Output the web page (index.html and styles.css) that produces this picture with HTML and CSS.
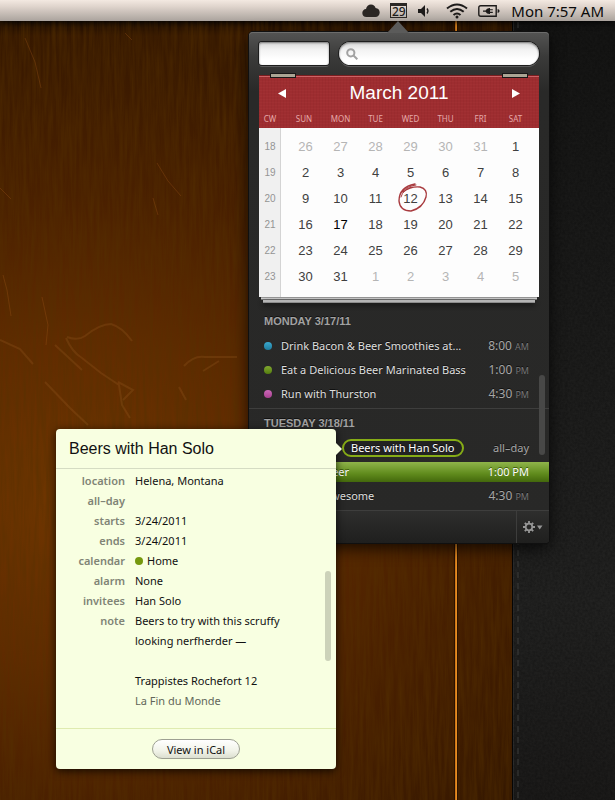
FILE: index.html
```html
<!DOCTYPE html>
<html lang="en">
<head>
<meta charset="utf-8">
<meta name="viewport" content="width=device-width, initial-scale=1">
<title>Calendar</title>
<link rel="stylesheet" href="styles.css">
</head>
<body>
<div class="backdrop" aria-hidden="true">
  <div class="wood">
    <svg class="texture" width="100%" height="100%">
      <filter id="grain" x="0" y="0" width="100%" height="100%">
        <feTurbulence type="fractalNoise" baseFrequency="0.3 0.018" numOctaves="4" seed="7"/>
        <feColorMatrix values="0 0 0 0 0.09  0 0 0 0 0.03  0 0 0 0 0  0.9 0 0 0 -0.25"/>
      </filter>
      <rect width="100%" height="100%" filter="url(#grain)"/>
      <g class="scratches">
        <path d="M25 38L35 62L41 88M125 33L132 40M157 163L168 181L181 196M153 198L158 215M3 275L7 290L11 316M0 188L11 199M42 297L48 325L46 345"/>
        <path class="soft" d="M67 337Q78 341 85 336Q100 324 111 324Q122 327 132 341M66 338Q72 352 82 358L101 373L119 385L122 405L130 418M55 345L82 370M45 382L70 408L88 425M0 340L20 349L33 364M184 366Q194 355 205 357L237 357M203 371L219 361M179 387L186 400M118 382L133 390L123 400"/>
      </g>
    </svg>
    <div class="inlay"></div>
  </div>
  <div class="leather">
    <svg class="texture" width="100%" height="100%">
      <filter id="hide" x="0" y="0" width="100%" height="100%">
        <feTurbulence type="fractalNoise" baseFrequency="0.4" numOctaves="3" seed="3"/>
        <feColorMatrix values="0 0 0 0 0  0 0 0 0 0  0 0 0 0 0  0.4 0 0 0 -0.1"/>
      </filter>
      <rect width="100%" height="100%" filter="url(#hide)"/>
      <line class="stitch" x1="5" y1="0" x2="5" y2="100%"/>
    </svg>
  </div>
</div>

<header class="menubar">
  <svg width="18" height="14" viewBox="0 0 18 14"><path d="M4.5 13A4.2 4.2 0 0 1 .3 9C.3 6.8 2 5.1 4 5 4.4 2.400 6.500.500 9 .500c2.300 0 4 1.500 4.600 3.500C16 4.100 17.700 6 17.700 8.500c0 2.500-1.900 4.500-4.300 4.500z" fill="#2b2724"/></svg>
  <div class="daybadge">29</div>
  <svg class="speaker" width="12" height="12" viewBox="0 0 12 12"><path d="M0 4h3l4-4v12L3 8H0z" fill="#1d1b1a"/><path d="M9 3.500q2 2.500 0 5" fill="none" stroke="#1d1b1a" stroke-width="1.300"/></svg>
  <svg class="wifi" width="22" height="16" viewBox="0 0 22 16" fill="none" stroke="#1d1b1a" stroke-width="2"><path d="M1 5.500Q11-2.500 21 5.500M4.300 8.800Q11 3.200 17.700 8.800M7.500 12Q11 9 14.500 12"/><circle cx="11" cy="14" r="1.500" fill="#1d1b1a" stroke="none"/></svg>
  <svg class="battery" width="22" height="12" viewBox="0 0 22 12"><path d="M6 .800H2.800q-2 0-2 2v6.400q0 2 2 2H6M6 .800h12.200v10.400H6" fill="none" stroke="#1d1b1a" stroke-width="1.400"/><path d="M19.600 4q2 .3 2 2t-2 2zM5 5.500h2.600Q8.500 3 11.500 3h.5v1.200h2.800v1.100H12v1.500h2.800v1.100H12V9h-.5q-3 0-3.900-2.300H5z" fill="#1d1b1a"/></svg>
  <time class="clock">Mon 7:57 AM</time>
</header>

<main class="stage">
  <section class="panel">
    <svg class="panel-tip" width="22" height="12" viewBox="0 0 22 12"><path d="M0 12L11 0L22 12z" fill="#5b5b5a"/></svg>
    <div class="toolbar">
      <input class="field" type="text" aria-label="Calendar">
      <div class="search">
        <svg width="12" height="12" viewBox="0 0 12 12" fill="none" stroke="#a2a2a2" stroke-width="2"><circle cx="4.800" cy="4.800" r="3.600"/><path d="M7.500 7.500l3.800 3.800"/></svg>
        <input type="search" aria-label="Search">
      </div>
    </div>

    <div class="calendar">
      <div class="cal-head">
        <button type="button" aria-label="Previous month"><svg width="8" height="9" viewBox="0 0 8 9"><path d="M8 0v9L0 4.500z" fill="#fff"/></svg></button>
        <h1>March 2011</h1>
        <button type="button" aria-label="Next month"><svg width="8" height="9" viewBox="0 0 8 9"><path d="M0 0v9l8-4.500z" fill="#fff"/></svg></button>
      </div>
      <table>
        <thead><tr><th>CW</th><th>SUN</th><th>MON</th><th>TUE</th><th>WED</th><th>THU</th><th>FRI</th><th>SAT</th></tr></thead>
        <tbody>
          <tr><th>18</th><td class="out">26</td><td class="out">27</td><td class="out">28</td><td class="out">29</td><td class="out">30</td><td class="out">31</td><td>1</td></tr>
          <tr><th>19</th><td>2</td><td>3</td><td>4</td><td>5</td><td>6</td><td>7</td><td>8</td></tr>
          <tr><th>20</th><td>9</td><td>10</td><td>11</td><td class="today">12<svg width="30" height="30" viewBox="0 0 30 30" fill="none" stroke="#a83a3e" stroke-linecap="round"><path stroke-width="1.400" d="M5 9Q13 3 22 4Q30 6 28 14Q25 25 13 28Q2 28 1 18Q1 4 17 1"/><path stroke-width="1" d="M4 9Q9 3 18 2M3 14Q5 6 14 4"/></svg></td><td>13</td><td>14</td><td>15</td></tr>
          <tr><th>21</th><td>16</td><td class="picked">17</td><td>18</td><td>19</td><td>20</td><td>21</td><td>22</td></tr>
          <tr><th>22</th><td>23</td><td>24</td><td>25</td><td>26</td><td>27</td><td>28</td><td>29</td></tr>
          <tr><th>23</th><td>30</td><td>31</td><td class="out">1</td><td class="out">2</td><td class="out">3</td><td class="out">4</td><td class="out">5</td></tr>
        </tbody>
      </table>
    </div>
    <div class="sheet upper"></div>
    <div class="sheet lower"></div>

    <div class="agenda">
      <section class="day">
        <h2>MONDAY 3/17/11</h2>
        <ul>
          <li><i class="dot blue"></i><span>Drink Bacon &amp; Beer Smoothies at...</span><time>8:00 <small>AM</small></time></li>
          <li><i class="dot green"></i><span>Eat a Delicious Beer Marinated Bass</span><time>1:00 <small>PM</small></time></li>
          <li><i class="dot pink"></i><span>Run with Thurston</span><time>4:30 <small>PM</small></time></li>
        </ul>
      </section>
      <section class="day">
        <h2>TUESDAY 3/18/11</h2>
        <ul>
          <li class="open"><span>Beers with Han Solo</span><time>all–day</time></li>
          <li class="selected"><span>Beer</span><time>1:00 PM</time></li>
          <li class="later"><span>Awesome</span><time>4:30 <small>PM</small></time></li>
        </ul>
      </section>
      <div class="agenda-scroll"></div>
    </div>

    <footer class="panel-foot">
      <button type="button" aria-label="Settings">
        <svg width="20" height="12" viewBox="0 0 20 12"><g stroke="#969696" fill="none"><circle cx="6" cy="6" r="3.300" stroke-width="1.800"/><path stroke-width="1.800" d="M6 0v2.500M6 9.500V12M0 6h2.500M9.500 6H12M1.800 1.800l1.700 1.700M8.500 8.500l1.700 1.700M1.800 10.200l1.700-1.700M8.500 3.500l1.700-1.700"/></g><path d="M14 4.500h5.500L16.700 8.500z" fill="#969696"/></svg>
      </button>
    </footer>
  </section>

  <article class="details">
    <svg class="details-tip" width="6" height="12" viewBox="0 0 6 12"><path d="M0 0l6 6l-6 6z" fill="#f8ffe1"/></svg>
    <h2>Beers with Han Solo</h2>
    <dl>
      <dt>location</dt><dd>Helena, Montana</dd>
      <dt>all–day</dt><dd></dd>
      <dt>starts</dt><dd>3/24/2011</dd>
      <dt>ends</dt><dd>3/24/2011</dd>
      <dt>calendar</dt><dd><i class="home-dot"></i>Home</dd>
      <dt>alarm</dt><dd>None</dd>
      <dt>invitees</dt><dd>Han Solo</dd>
      <dt>note</dt><dd><p>Beers to try with this scruffy<br>looking nerfherder —</p><p>Trappistes Rochefort 12<br><span class="fading">La Fin du Monde</span></p></dd>
    </dl>
    <div class="details-scroll"></div>
    <footer><button type="button">View in iCal</button></footer>
  </article>
</main>
</body>
</html>
```
FILE: styles.css
```css
* { box-sizing: border-box; }

body {
  margin: 0;
  min-height: 100vh;
  position: relative;
  overflow-x: hidden;
  background: #3a1a00;
  font: 11px/20px "Noto Sans", "Open Sans", sans-serif;
}

h1, h2, ul, dl, dd, p { margin: 0; padding: 0; }
ul { list-style: none; }
button { border: 0; padding: 0; background: none; font: inherit; color: inherit; display: grid; place-items: center; }
svg { display: block; flex: none; }

/* Desktop */
.backdrop { position: absolute; inset: 0; display: grid; grid-template-columns: 1fr 102px; }
.wood {
  position: relative;
  background:
    linear-gradient(rgba(0, 0, 0, .5) 20px, transparent 36px),
    radial-gradient(ellipse 540px 470px at 80px 500px, #703600, #602b00 35%, #4a2000 65%, #361800 100%);
}
.texture { position: absolute; inset: 0; }
.scratches path { fill: none; stroke: #a4581c; stroke-width: 1; opacity: .3; }
.scratches .soft { stroke: #b87630; stroke-width: 2; opacity: .18; }
.inlay {
  position: absolute;
  top: 0;
  bottom: 0;
  right: 56px;
  width: 2px;
  background: linear-gradient(90deg, #c46a12, #f09a28);
  box-shadow: 0 0 0 1px #2a1200;
}
.leather {
  position: relative;
  background: linear-gradient(#141413, #191918 200px, #222221 600px, #1b1a19);
  box-shadow: inset 1px 0 #2c2c2c, 0 0 0 1px #050505;
}
.stitch { stroke: #3c3c3b; stroke-width: 1; stroke-dasharray: 6 5; }

/* Menu bar */
.menubar {
  position: relative;
  display: flex;
  align-items: center;
  justify-content: flex-end;
  height: 21px;
  padding: 0 11px 0 8px;
  background: linear-gradient(#f3e9e1, #e0d5cd 30%, #aaa39d);
  box-shadow: 0 1px 6px #000;
}
.daybadge {
  margin: 0 11px 0 10px;
  width: 17px;
  height: 15px;
  border: 1px solid #2b2724;
  border-top-width: 3px;
  font: 500 12px/11px "Noto Sans", sans-serif;
  text-align: center;
  color: #1d1b1a;
}
.wifi { margin: 0 10px 0 16px; }
.clock { margin-left: 11px; font-size: 15px; color: #0b0b0b; }

/* Calendar panel */
.stage { position: relative; padding: 11px 66px 16px 8px; }
.panel {
  position: relative;
  width: 300px;
  margin-left: auto;
  padding-top: 10px;
  border-radius: 4px;
  background: linear-gradient(#545453, #3b3b3a 24px, #292928 60px, #282827);
  box-shadow: inset 0 1px #6c6c6b, 0 0 0 1px #101010, 0 5px 16px rgba(0, 0, 0, .75);
}
.panel-tip { position: absolute; top: -11px; left: 138px; }
.toolbar { display: flex; gap: 10px; padding: 0 10px; margin-bottom: 10px; }
.toolbar input { min-width: 0; border: 0; outline: 0; font: inherit; appearance: none; }
.toolbar .field, .search {
  height: 23px;
  border-radius: 3px;
  background: linear-gradient(#d6d6d6, #f3f3f3 35%, #fff 75%);
  box-shadow: inset 0 1px 2px #777, 0 0 0 1px #1d1d1d, 0 2px 0 #5b5b5b;
}
.toolbar .field { width: 70px; }
.search { flex: 1; display: flex; align-items: center; gap: 6px; padding: 0 10px 0 7px; border-radius: 12px; }
.search input { flex: 1; background: transparent; }

.calendar {
  position: relative;
  margin: 0 10px;
  padding-bottom: 7px;
  background: linear-gradient(90deg, #f0f0f0 21px, #d4d4d4 21px, #d4d4d4 22px, #fdfdfd 22px);
  font-family: "Liberation Sans", Arial, sans-serif;
}
.calendar::before, .calendar::after {
  content: "";
  position: absolute;
  top: -2px;
  width: 24px;
  height: 3px;
  background: #aaa594;
  border: 1px solid #181818;
}
.calendar::before { left: 11px; }
.calendar::after { right: 11px; }
.cal-head, thead {
  background:
    repeating-linear-gradient(90deg, rgba(70, 0, 0, .05) 0 1px, transparent 1px 3px),
    repeating-linear-gradient(rgba(255, 140, 140, .03) 0 1px, transparent 1px 3px),
    #9e2d30;
}
.cal-head {
  display: flex;
  align-items: center;
  justify-content: space-between;
  height: 36px;
  padding: 0 19px;
  color: #fff;
  box-shadow: inset 0 1px #7c1e20, inset 0 2px #cc6265;
}
.cal-head h1 { font-size: 19px; font-weight: 400; line-height: 36px; }
.calendar button { height: 20px; }

table { width: 100%; table-layout: fixed; border-collapse: collapse; }
th, td { padding: 0; text-align: center; font-weight: 400; }
thead th { height: 17px; color: #e6a9a9; font: 8px/16px "Noto Sans", sans-serif; vertical-align: top; }
thead th:first-child { width: 22px; }
thead th:nth-child(2) { width: 42px; padding-left: 4px; }
th:last-child, td:last-child { width: 41px; padding-right: 6px; }
tbody::before { content: ""; display: table-row; height: 6px; }
tbody th { height: 26px; font-size: 10px; color: #949494; }
tbody td { font-size: 13px; color: #404040; }
tbody td:nth-child(2) { padding-left: 7px; }
tbody .out { color: #b5b5b5; }
tbody .picked { color: #000; }
.today { position: relative; }
.today svg { position: absolute; top: -3px; left: 5px; }

.sheet { height: 3px; }
.upper { margin: 0 12px; background: #d2d2d2; border-bottom: 1px solid #777; border-top: 1px solid #999; }
.lower { margin: 0 14px 4px; background: #b5b5b5; border-bottom: 1px solid #8d8d8d; box-shadow: 0 2px 5px #111; }

/* Agenda */
.agenda { position: relative; }
.day { padding: 2px 0; border-bottom: 1px solid #3e3e3d; }
.day h2 { padding-left: 15px; font: bold 11px/25px "Liberation Sans", Arial, sans-serif; color: #a2a2a2; text-shadow: 0 -1px #111; }
.day li {
  display: flex;
  align-items: center;
  height: 24px;
  padding: 0 20px 0 15px;
  color: #dedede;
  text-shadow: 0 -1px #111;
}
.day time { margin-left: auto; color: #a6a6a6; font-size: 12px; }
.day small { font-size: 9px; color: #777; }
.dot { width: 8px; height: 8px; margin-right: 9px; border-radius: 50%; }
.blue { background: linear-gradient(#3aa9ce, #1f7c9e); }
.green { background: linear-gradient(#82a930, #547d0f); }
.pink { background: linear-gradient(#cb68b8, #a8408f); }
.day .open { padding-left: 93px; color: #fff; }
.open span { padding: 0 7px; line-height: 14px; border: 2px solid #86ac16; border-radius: 10px; background: #222; }
.day .open time, .day .selected time { font-size: 11px; }
.day .selected {
  height: 20px;
  margin: 2px 0;
  padding-left: 76px;
  color: #fff;
  background: linear-gradient(#8fb44a, #5f8a1c 60%, #43680c);
  text-shadow: 0 -1px #3c5c0a;
}
.day .selected time { color: #fff; }
.day .later { padding-left: 75px; }
.agenda-scroll { position: absolute; top: 68px; right: 4px; width: 6px; height: 80px; border-radius: 3px; background: #484847; }

.panel-foot {
  display: flex;
  justify-content: flex-end;
  height: 32px;
  border-radius: 0 0 4px 4px;
  background: linear-gradient(#2e2e2d, #1f1f1e);
}
.panel-foot button { width: 33px; border-left: 1px solid #3d3d3c; }

/* Event details */
.details {
  position: absolute;
  top: 408px;
  right: 279px;
  width: 280px;
  border-radius: 4px;
  background: #f8ffe1;
  color: #111;
  box-shadow: 0 2px 9px rgba(0, 0, 0, .75);
}
.details-tip { position: absolute; top: 14px; right: -6px; }
.details h2 {
  padding: 0 13px;
  font: 16px/39px "Liberation Sans", Arial, sans-serif;
  border-bottom: 1px solid #d5dcc3;
}
.details dl { display: grid; grid-template-columns: 69px 1fr; column-gap: 10px; padding: 2px 20px 17px 0; }
.details dt { text-align: right; font-weight: 600; color: #808476; }
.details p + p { margin-top: 20px; }
.fading { color: #62665a; }
.home-dot { display: inline-block; width: 8px; height: 8px; margin-right: 4px; border-radius: 50%; background: #75980e; }
.details-scroll { position: absolute; top: 142px; right: 5px; width: 6px; height: 90px; border-radius: 3px; background: #ccd2b9; }
.details footer { display: flex; justify-content: center; padding: 10px; border-top: 1px solid #dfebb0; }
.details footer button {
  width: 88px;
  height: 20px;
  border: 1px solid #9da092;
  border-radius: 10px;
  background: linear-gradient(#fff, #f1f3e8 60%, #dcdfd0);
  color: #111;
}
```
